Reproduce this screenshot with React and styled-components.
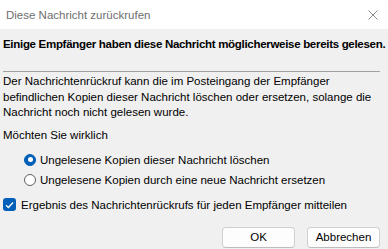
import React from 'react';
import styled, { createGlobalStyle } from 'styled-components';

const GlobalStyle = createGlobalStyle`
    html, body {
        margin: 0;
        padding: 0;
        background: #ffffff;
    }
    `

const Window = styled.div`
    display: flex;
    flex-direction: column;

    width: 388px;
    height: 249px;
    overflow: hidden;

    background: #f0f0f0;
    border-top-right-radius: 7px;

    font-family: "Liberation Sans", Arial, sans-serif;
    font-size: 11.5px;
    color: #000;
    `
const TitleBar = styled.div`
    display: flex;
    align-items: center;
    justify-content: space-between;

    height: 29px;
    padding: 0 10px 0 6px;
    flex-shrink: 0;

    background: #ffffff;
    `
const Title = styled.span`
    font-size: 11.5px;
    color: #6e6e6e;
    `
const Content = styled.div`
    display: flex;
    flex-direction: column;

    padding: 7px 8px 0 3px;
    `
const Headline = styled.div`
    font-weight: bold;
    line-height: 16px;
    letter-spacing: -0.3px;
    white-space: nowrap;
    `
const Separator = styled.hr`
    margin: 19px 0 2px 0;
    border: none;
    border-top: 1px solid #a0a0a0;
    `
const Paragraph = styled.p`
    margin: 0;
    line-height: 15.5px;
    white-space: nowrap;
    `
const Question = styled.div`
    margin-top: 6px;
    line-height: 16px;
    `
const Options = styled.div`
    display: flex;
    flex-direction: column;

    margin-top: 7px;
    padding-left: 21px;
    `
const Row = styled.label`
    display: flex;
    align-items: center;
    gap: ${props => props.$gap || 4}px;

    height: 20px;
    white-space: nowrap;
    `
const Radio = styled.span`
    display: flex;
    align-items: center;
    justify-content: center;
    box-sizing: border-box;

    width: 12px;
    height: 12px;
    border-radius: 50%;

    background: ${props => props.$checked ? '#005fb8' : '#ffffff'};
    border: 1px solid ${props => props.$checked ? '#005fb8' : '#5f5f5f'};

    &::after {
        content: '';
        display: ${props => props.$checked ? 'block' : 'none'};
        width: 5px;
        height: 5px;
        border-radius: 50%;
        background: #ffffff;
    }
    `
const CheckRow = styled(Row)`
    margin-top: 5px;
    `
const Checkbox = styled.span`
    display: flex;
    align-items: center;
    justify-content: center;

    width: 13px;
    height: 13px;
    border-radius: 3px;

    background: #005fb8;
    `
const Buttons = styled.div`
    display: flex;
    justify-content: flex-end;
    gap: 12px;

    margin-top: 12px;
    `
const Button = styled.button`
    box-sizing: border-box;
    width: 73px;
    height: 21px;
    padding: 0;

    background: #fdfdfd;
    border: 1px solid #d0d0d0;
    border-bottom-color: #bdbdbd;
    border-radius: 4px;

    font-family: "Liberation Sans", Arial, sans-serif;
    font-size: 11.5px;
    color: #000;
    `

export default function App() {
    return (
        <>
            <GlobalStyle/>
            <Window>
                <TitleBar>
                    <Title>Diese Nachricht zurückrufen</Title>
                    <svg width="10" height="10" viewBox="0 0 10 10">
                        <path d="M0.5 0.5 L9.5 9.5 M9.5 0.5 L0.5 9.5" stroke="#8a8a8a" strokeWidth="1" fill="none"/>
                    </svg>
                </TitleBar>
                <Content>
                    <Headline>Einige Empfänger haben diese Nachricht möglicherweise bereits gelesen.</Headline>
                    <Separator/>
                    <Paragraph>
                        Der Nachrichtenrückruf kann die im Posteingang der Empfänger<br/>
                        befindlichen Kopien dieser Nachricht löschen oder ersetzen, solange die<br/>
                        Nachricht noch nicht gelesen wurde.
                    </Paragraph>
                    <Question>Möchten Sie wirklich</Question>
                    <Options>
                        <Row><Radio $checked/>Ungelesene Kopien dieser Nachricht löschen</Row>
                        <Row><Radio/>Ungelesene Kopien durch eine neue Nachricht ersetzen</Row>
                    </Options>
                    <CheckRow $gap={5}>
                        <Checkbox>
                            <svg width="9" height="8" viewBox="0 0 9 8">
                                <path d="M1 4.2 L3.4 6.5 L8 1.5" stroke="#fff" strokeWidth="1.3" fill="none"/>
                            </svg>
                        </Checkbox>
                        Ergebnis des Nachrichtenrückrufs für jeden Empfänger mitteilen
                    </CheckRow>
                    <Buttons>
                        <Button>OK</Button>
                        <Button>Abbrechen</Button>
                    </Buttons>
                </Content>
            </Window>
        </>
    )
}
